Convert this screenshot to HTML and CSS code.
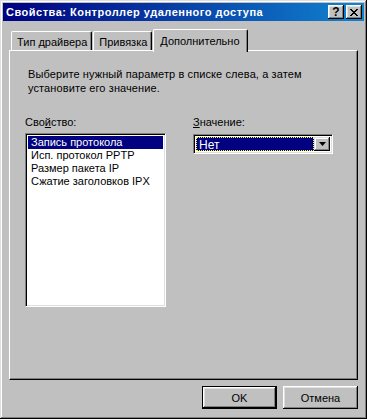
FILE: index.html
```html
<!DOCTYPE html>
<html>
<head>
    <meta charset="UTF-8">
    <title>Свойства: Контроллер удаленного доступа</title>
    <link rel="stylesheet" href="styles.css">
</head>
<body>
    <div class="window">
        <!-- Title bar -->
        <div class="titlebar">
            <span class="title">Свойства: Контроллер удаленного доступа</span>
            <div class="title-buttons">
                <span class="tbtn">?</span>
                <span class="tbtn close">
                    <svg width="8" height="7" viewBox="0 0 8 7">
                        <path d="M0 0h2v1h1v1h2v-1h1v-1h2v1h-1v1h-1v1h-1v1h1v1h1v1h1v1h-2v-1h-1v-1h-2v1h-1v1h-2v-1h1v-1h1v-1h1v-1h-1v-1h-1v-1h-1z" fill="#000"/>
                    </svg>
                </span>
            </div>
        </div>

        <!-- Tabs -->
        <div class="tabs">
            <div class="tab">Тип драйвера</div>
            <div class="tab">Привязка</div>
            <div class="tab active">Дополнительно</div>
        </div>

        <div class="panel">
            <p class="hint">Выберите нужный параметр в списке слева, а затем<br>установите его значение.</p>
            <div class="columns">
                <div class="col-left">
                    <div class="label">Сво<u>й</u>ство:</div>
                    <div class="listbox">
                        <div class="item selected">Запись протокола</div>
                        <div class="item">Исп. протокол PPTP</div>
                        <div class="item">Размер пакета IP</div>
                        <div class="item">Сжатие заголовков IPX</div>
                    </div>
                </div>
                <div class="col-right">
                    <div class="label"><u>З</u>начение:</div>
                    <div class="combo">
                        <div class="combo-value"><span class="focus">Нет</span></div>
                        <div class="combo-btn">
                            <svg width="7" height="4" viewBox="0 0 7 4"><path d="M0 0h7L3.5 4z" fill="#000"/></svg>
                        </div>
                    </div>
                </div>
            </div>
        </div>

        <!-- Dialog buttons -->
        <div class="footer">
            <button class="btn default">OK</button>
            <button class="btn">Отмена</button>
        </div>
    </div>
</body>
</html>
```

FILE: styles.css
```css
body {
    margin: 0;
    background-color: #c0c0c0;
    font-family: "Liberation Sans", Arial, sans-serif;
    font-size: 11px;
}

.window {
    width: 367px;
    height: 419px;
    box-sizing: border-box;
    padding: 3px;
    background-color: #c0c0c0;
    box-shadow: inset -1px -1px #000, inset 1px 1px #dfdfdf,
                inset -2px -2px #808080, inset 2px 2px #fff;
    display: flex;
    flex-direction: column;
}

/* Title bar */
.titlebar {
    height: 18px;
    background: linear-gradient(to right, #000080, #1084d0);
    display: flex;
    align-items: center;
    justify-content: space-between;
    padding: 0 2px 0 3px;
}

.title {
    color: #fff;
    font-weight: bold;
    font-size: 11px;
    letter-spacing: 0.5px;
}

.title-buttons {
    display: flex;
    gap: 2px;
}

.tbtn {
    width: 16px;
    height: 14px;
    box-sizing: border-box;
    background-color: #c0c0c0;
    box-shadow: inset -1px -1px #000, inset 1px 1px #fff,
                inset -2px -2px #808080, inset 2px 2px #dfdfdf;
    font-weight: bold;
    font-size: 12px;
    line-height: 14px;
    text-align: center;
    display: flex;
    align-items: center;
    justify-content: center;
}

/* Tabs */
.tabs {
    margin-top: 8px;
    padding-left: 8px;
    display: flex;
    align-items: flex-end;
    height: 21px;
    position: relative;
    z-index: 1;
}

.tab {
    height: 19px;
    box-sizing: border-box;
    padding: 4px 4px 0 5px;
    border-left: 1px solid #fff;
    border-top: 1px solid #fff;
    border-right: 1px solid #000;
    border-top-left-radius: 2px;
    border-top-right-radius: 2px;
    box-shadow: inset -1px 0 #808080;
    margin-right: 1px;
    background-color: #c0c0c0;
}

.tab.active {
    height: 23px;
    margin-bottom: -2px;
    padding: 5px 7px 0 6px;
}

.panel {
    margin: 0 6px 0 6px;
    height: 330px;
    box-sizing: border-box;
    border-left: 1px solid #fff;
    border-top: 1px solid #fff;
    border-right: 1px solid #000;
    border-bottom: 1px solid #000;
    box-shadow: inset -1px -1px #808080;
    padding: 16px 0 0 15px;
}

.hint {
    margin: 0 0 0 3px;
    line-height: 14px;
    letter-spacing: 0.1px;
}

.columns {
    display: flex;
    margin-top: 21px;
}

.label {
    line-height: 13px;
}

.col-left {
    width: 141px;
}

.col-right {
    margin-left: 27px;
    width: 140px;
}

.listbox {
    margin-top: 4px;
    height: 174px;
    box-sizing: border-box;
    background-color: #fff;
    border-left: 1px solid #808080;
    border-top: 1px solid #808080;
    border-right: 1px solid #fff;
    border-bottom: 1px solid #fff;
    box-shadow: inset 1px 1px #000, inset -1px -1px #dfdfdf;
    padding: 2px;
}

.item {
    height: 13px;
    line-height: 13px;
    padding-left: 3px;
}

.item.selected {
    background-color: #000080;
    color: #fff;
}

.combo {
    margin-top: 5px;
    height: 20px;
    box-sizing: border-box;
    background-color: #fff;
    border-left: 1px solid #808080;
    border-top: 1px solid #808080;
    border-right: 1px solid #fff;
    border-bottom: 1px solid #fff;
    box-shadow: inset 1px 1px #000, inset -1px -1px #dfdfdf;
    padding: 2px;
    display: flex;
}

.combo-value {
    flex: 1;
    background-color: #000080;
    color: #fff;
    border: 1px dotted #ffff00;
    padding-left: 2px;
    line-height: 14px;
    font-size: 12px;
}

.combo-btn {
    width: 16px;
    box-sizing: border-box;
    background-color: #c0c0c0;
    box-shadow: inset -1px -1px #000, inset 1px 1px #dfdfdf,
                inset -2px -2px #808080, inset 2px 2px #fff;
    display: flex;
    align-items: center;
    justify-content: center;
}

/* Footer buttons */
.footer {
    margin-top: 6px;
    display: flex;
    justify-content: flex-end;
    gap: 6px;
    padding-right: 6px;
}

.btn {
    width: 75px;
    height: 23px;
    font-family: "Liberation Sans", Arial, sans-serif;
    font-size: 11px;
    background-color: #c0c0c0;
    border: none;
    padding: 0;
    box-shadow: inset -1px -1px #000, inset 1px 1px #fff,
                inset -2px -2px #808080, inset 2px 2px #dfdfdf;
}

.btn.default {
    box-shadow: inset -1px -1px #000, inset 1px 1px #000,
                inset -2px -2px #000, inset 2px 2px #fff,
                inset -3px -3px #808080, inset 3px 3px #dfdfdf;
}
```
